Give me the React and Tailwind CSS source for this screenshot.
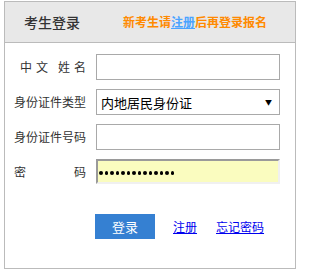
const font = { fontFamily: "'Noto Sans CJK SC', 'Liberation Sans', sans-serif" };

const Label = ({ children }) => (
  <div className="w-[72px] ml-[9px] mr-[10px] flex items-center justify-end text-[12px] text-[#333] leading-none">
    {children}
  </div>
);

export default function App() {
  const dots = Array.from({ length: 14 });
  return (
    <div className="w-[299px] h-[274px] bg-white pt-[1px] pl-[4px]" style={font}>
      <div className="w-[292px] h-[268px] border border-[#bbbbbb] flex flex-col">
        <div className="h-[41px] bg-[#e8e8e8] border-b border-[#bbbbbb] flex items-center">
          <span className="ml-[19px] text-[14px] text-[#333] font-medium">考生登录</span>
          <span className="ml-[43px] text-[12px] font-bold text-[#ff8a00]">
            新考生请<span className="text-[#4aa3ff] underline">注册</span>后再登录报名
          </span>
        </div>

        <div className="flex flex-col gap-[9px] pt-[11px]">
          <div className="flex h-[26px]">
            <Label>
              <span className="mr-[4px]">中</span>
              <span className="mr-[10px]">文</span>
              <span className="mr-[4px]">姓</span>
              <span>名</span>
            </Label>
            <div className="w-[184px] border border-[#a9a9a9] bg-white" />
          </div>

          <div className="flex h-[26px]">
            <Label>身份证件类型</Label>
            <div className="w-[184px] border border-[#a9a9a9] bg-white flex items-center justify-between pl-[4px] pr-[7px]">
              <span className="text-[13px] text-black leading-none">内地居民身份证</span>
              <span className="text-[7px] text-black leading-none">▼</span>
            </div>
          </div>

          <div className="flex h-[26px]">
            <Label>身份证件号码</Label>
            <div className="w-[184px] border border-[#a9a9a9] bg-white" />
          </div>

          <div className="flex h-[25px]">
            <div className="w-[72px] ml-[9px] mr-[10px] flex items-center justify-between text-[12px] text-[#333] leading-none">
              <span>密</span>
              <span>码</span>
            </div>
            <div className="w-[184px] border-2 border-t-[#9a9a9a] border-l-[#9a9a9a] border-r-[#f0f0f0] border-b-[#f0f0f0] bg-[#fafcbf] flex items-center pl-[1px] pt-[3px]">
              <div className="flex gap-[2px]">
                {dots.map((_, i) => (
                  <span key={i} className="w-[3.5px] h-[3.5px] rounded-full bg-black" />
                ))}
              </div>
            </div>
          </div>
        </div>

        <div className="flex items-center mt-[30px] ml-[90px]">
          <button className="w-[60px] h-[25px] bg-[#3580d2] text-white text-[13px] leading-none">登录</button>
          <a href="#" className="ml-[18px] text-[12px] text-[#0000ee] underline leading-none">注册</a>
          <a href="#" className="ml-[19px] text-[12px] text-[#0000ee] underline leading-none">忘记密码</a>
        </div>
      </div>
    </div>
  );
}
